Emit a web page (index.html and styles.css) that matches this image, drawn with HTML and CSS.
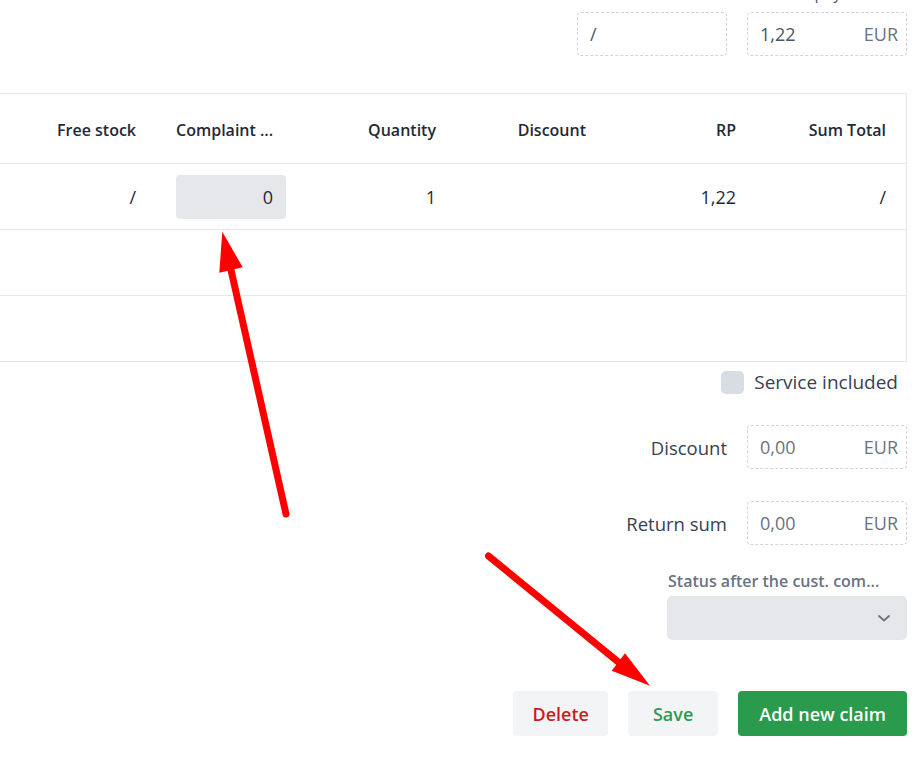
FILE: index.html
```html
<!DOCTYPE html>
<html lang="en">
<head>
    <meta charset="UTF-8">
    <meta name="viewport" content="width=device-width, initial-scale=1.0">
    <title>Claim</title>
    <link rel="stylesheet" href="styles.css">
</head>
<body>
    <div class="page">
        <div class="totals">
            <div class="field">
                <div class="money-box wide">
                    <span class="value">/</span>
                </div>
            </div>
            <div class="field">
                <label class="field-label">Amount to pay</label>
                <div class="money-box">
                    <span class="value">1,22</span>
                    <span class="unit">EUR</span>
                </div>
            </div>
        </div>

        <table class="items">
            <thead>
                <tr>
                    <th class="col-first">Free stock</th>
                    <th class="col-left">Complaint ...</th>
                    <th>Quantity</th>
                    <th>Discount</th>
                    <th>RP</th>
                    <th>Sum Total</th>
                </tr>
            </thead>
            <tbody>
                <tr>
                    <td>/</td>
                    <td class="col-left"><div class="qty-input">0</div></td>
                    <td>1</td>
                    <td></td>
                    <td>1,22</td>
                    <td>/</td>
                </tr>
                <tr>
                    <td></td><td></td><td></td><td></td><td></td><td></td>
                </tr>
                <tr>
                    <td></td><td></td><td></td><td></td><td></td><td></td>
                </tr>
            </tbody>
        </table>

        <div class="summary">
            <label class="check-row">
                <span class="checkbox"></span>
                <span>Service included</span>
            </label>

            <div class="form-row">
                <span class="row-label">Discount</span>
                <div class="money-box">
                    <span class="value empty">0,00</span>
                    <span class="unit">EUR</span>
                </div>
            </div>

            <div class="form-row">
                <span class="row-label">Return sum</span>
                <div class="money-box">
                    <span class="value empty">0,00</span>
                    <span class="unit">EUR</span>
                </div>
            </div>

            <div class="status">
                <div class="status-label">Status after the cust. com...</div>
                <div class="select">
                    <svg width="16" height="16" viewBox="0 0 16 16" fill="none">
                        <path d="M3 6l5 4.5L13 6" stroke="#6b7280" stroke-width="1.8" stroke-linecap="round" stroke-linejoin="round"/>
                    </svg>
                </div>
            </div>

            <div class="actions">
                <button class="btn btn-light btn-danger">Delete</button>
                <button class="btn btn-light btn-save">Save</button>
                <button class="btn btn-primary">Add new claim</button>
            </div>
        </div>
    </div>

    <svg class="arrows" width="924" height="762" viewBox="0 0 924 762">
        <line x1="286" y1="514" x2="231" y2="270" stroke="#ff0000" stroke-width="7" stroke-linecap="round"/>
        <polygon points="222.3,231.7 219.3,272.7 242.7,267.3" fill="#ff0000"/>
        <line x1="488.5" y1="556" x2="618.3" y2="662" stroke="#ff0000" stroke-width="7" stroke-linecap="round"/>
        <polygon points="650,685.7 611.7,670.7 625,653.3" fill="#ff0000"/>
    </svg>
</body>
</html>
```

FILE: styles.css
```css
* {
    margin: 0;
    padding: 0;
    box-sizing: border-box;
}

body {
    font-family: 'Open Sans', 'Noto Sans', sans-serif;
    background: #ffffff;
    color: #374151;
    width: 924px;
    height: 762px;
    overflow: hidden;
    position: relative;
}

.page {
    width: 907px;
}

/* Totals above the table */
.totals {
    display: flex;
    justify-content: flex-end;
    align-items: flex-end;
    gap: 20px;
    margin-top: -18px;
}

.field {
    display: flex;
    flex-direction: column;
}

.field-label {
    font-size: 16px;
    line-height: 22px;
    font-weight: 500;
    color: #4b5563;
    margin-bottom: 8px;
    margin-left: -16px;
}

.money-box {
    width: 160px;
    height: 44px;
    border: 1px dashed #d1d5db;
    border-radius: 4px;
    display: flex;
    align-items: center;
    justify-content: space-between;
    padding: 0 8px 0 12px;
    font-size: 18px;
}

.money-box.wide {
    width: 150px;
}

.money-box .value {
    color: #4b5563;
}

.money-box .value.empty {
    color: #6b7280;
}

.money-box .unit {
    color: #6b7280;
}

/* Items table */
.items {
    width: 907px;
    margin-top: 37px;
    border-collapse: separate;
    border-spacing: 0;
    border-top: 1px solid #e5e7eb;
    border-right: 1px solid #e5e7eb;
    table-layout: fixed;
}

.items th,
.items td {
    width: 150px;
    padding: 0 20px;
    text-align: right;
    vertical-align: middle;
    border-bottom: 1px solid #e5e7eb;
    white-space: nowrap;
}

.items th {
    height: 70px;
    font-size: 16px;
    font-weight: 600;
    color: #1f2937;
    padding-top: 2px;
}

.items td {
    height: 66px;
    font-size: 18px;
    color: #1f2937;
}

.items .col-first {
    width: 156px;
}

.items .col-left {
    text-align: left;
}

.qty-input {
    width: 110px;
    height: 44px;
    background: #e5e7eb;
    border-radius: 4px;
    display: flex;
    align-items: center;
    justify-content: flex-end;
    padding-right: 13px;
}

/* Summary form */
.summary {
    display: flex;
    flex-direction: column;
    align-items: flex-end;
}

.check-row {
    display: flex;
    align-items: center;
    gap: 10px;
    margin-top: 9px;
    margin-right: 9px;
    font-size: 19px;
    line-height: 23px;
    color: #374151;
}

.checkbox {
    width: 23px;
    height: 23px;
    background: #d8dde3;
    border-radius: 5px;
}

.form-row {
    display: flex;
    align-items: center;
    gap: 20px;
    margin-top: 31px;
    font-size: 18.5px;
    color: #374151;
}

.form-row:nth-of-type(2) {
    margin-top: 32px;
}

.status {
    margin-top: 25px;
    width: 240px;
}

.status-label {
    font-size: 16px;
    font-weight: 600;
    color: #6b7280;
    line-height: 22px;
    margin-bottom: 4px;
    padding-left: 1px;
}

.select {
    height: 44px;
    background: #e5e7eb;
    border-radius: 5px;
    display: flex;
    align-items: center;
    justify-content: flex-end;
    padding-right: 15px;
}

.actions {
    display: flex;
    gap: 20px;
    margin-top: 51px;
}

.btn {
    height: 45px;
    border: none;
    border-radius: 4px;
    font-family: inherit;
    font-size: 18px;
    font-weight: 600;
    padding: 0 19px;
    cursor: pointer;
}

.btn-light {
    background: #f3f4f6;
}

.btn-danger {
    color: #c81e1e;
}

.btn-save {
    color: #2f9a4e;
    padding: 0 25px;
}

.btn-primary {
    background: #2a9a4c;
    color: #ffffff;
    padding: 0 21px;
}

.arrows {
    position: absolute;
    top: 0;
    left: 0;
    pointer-events: none;
}
```
